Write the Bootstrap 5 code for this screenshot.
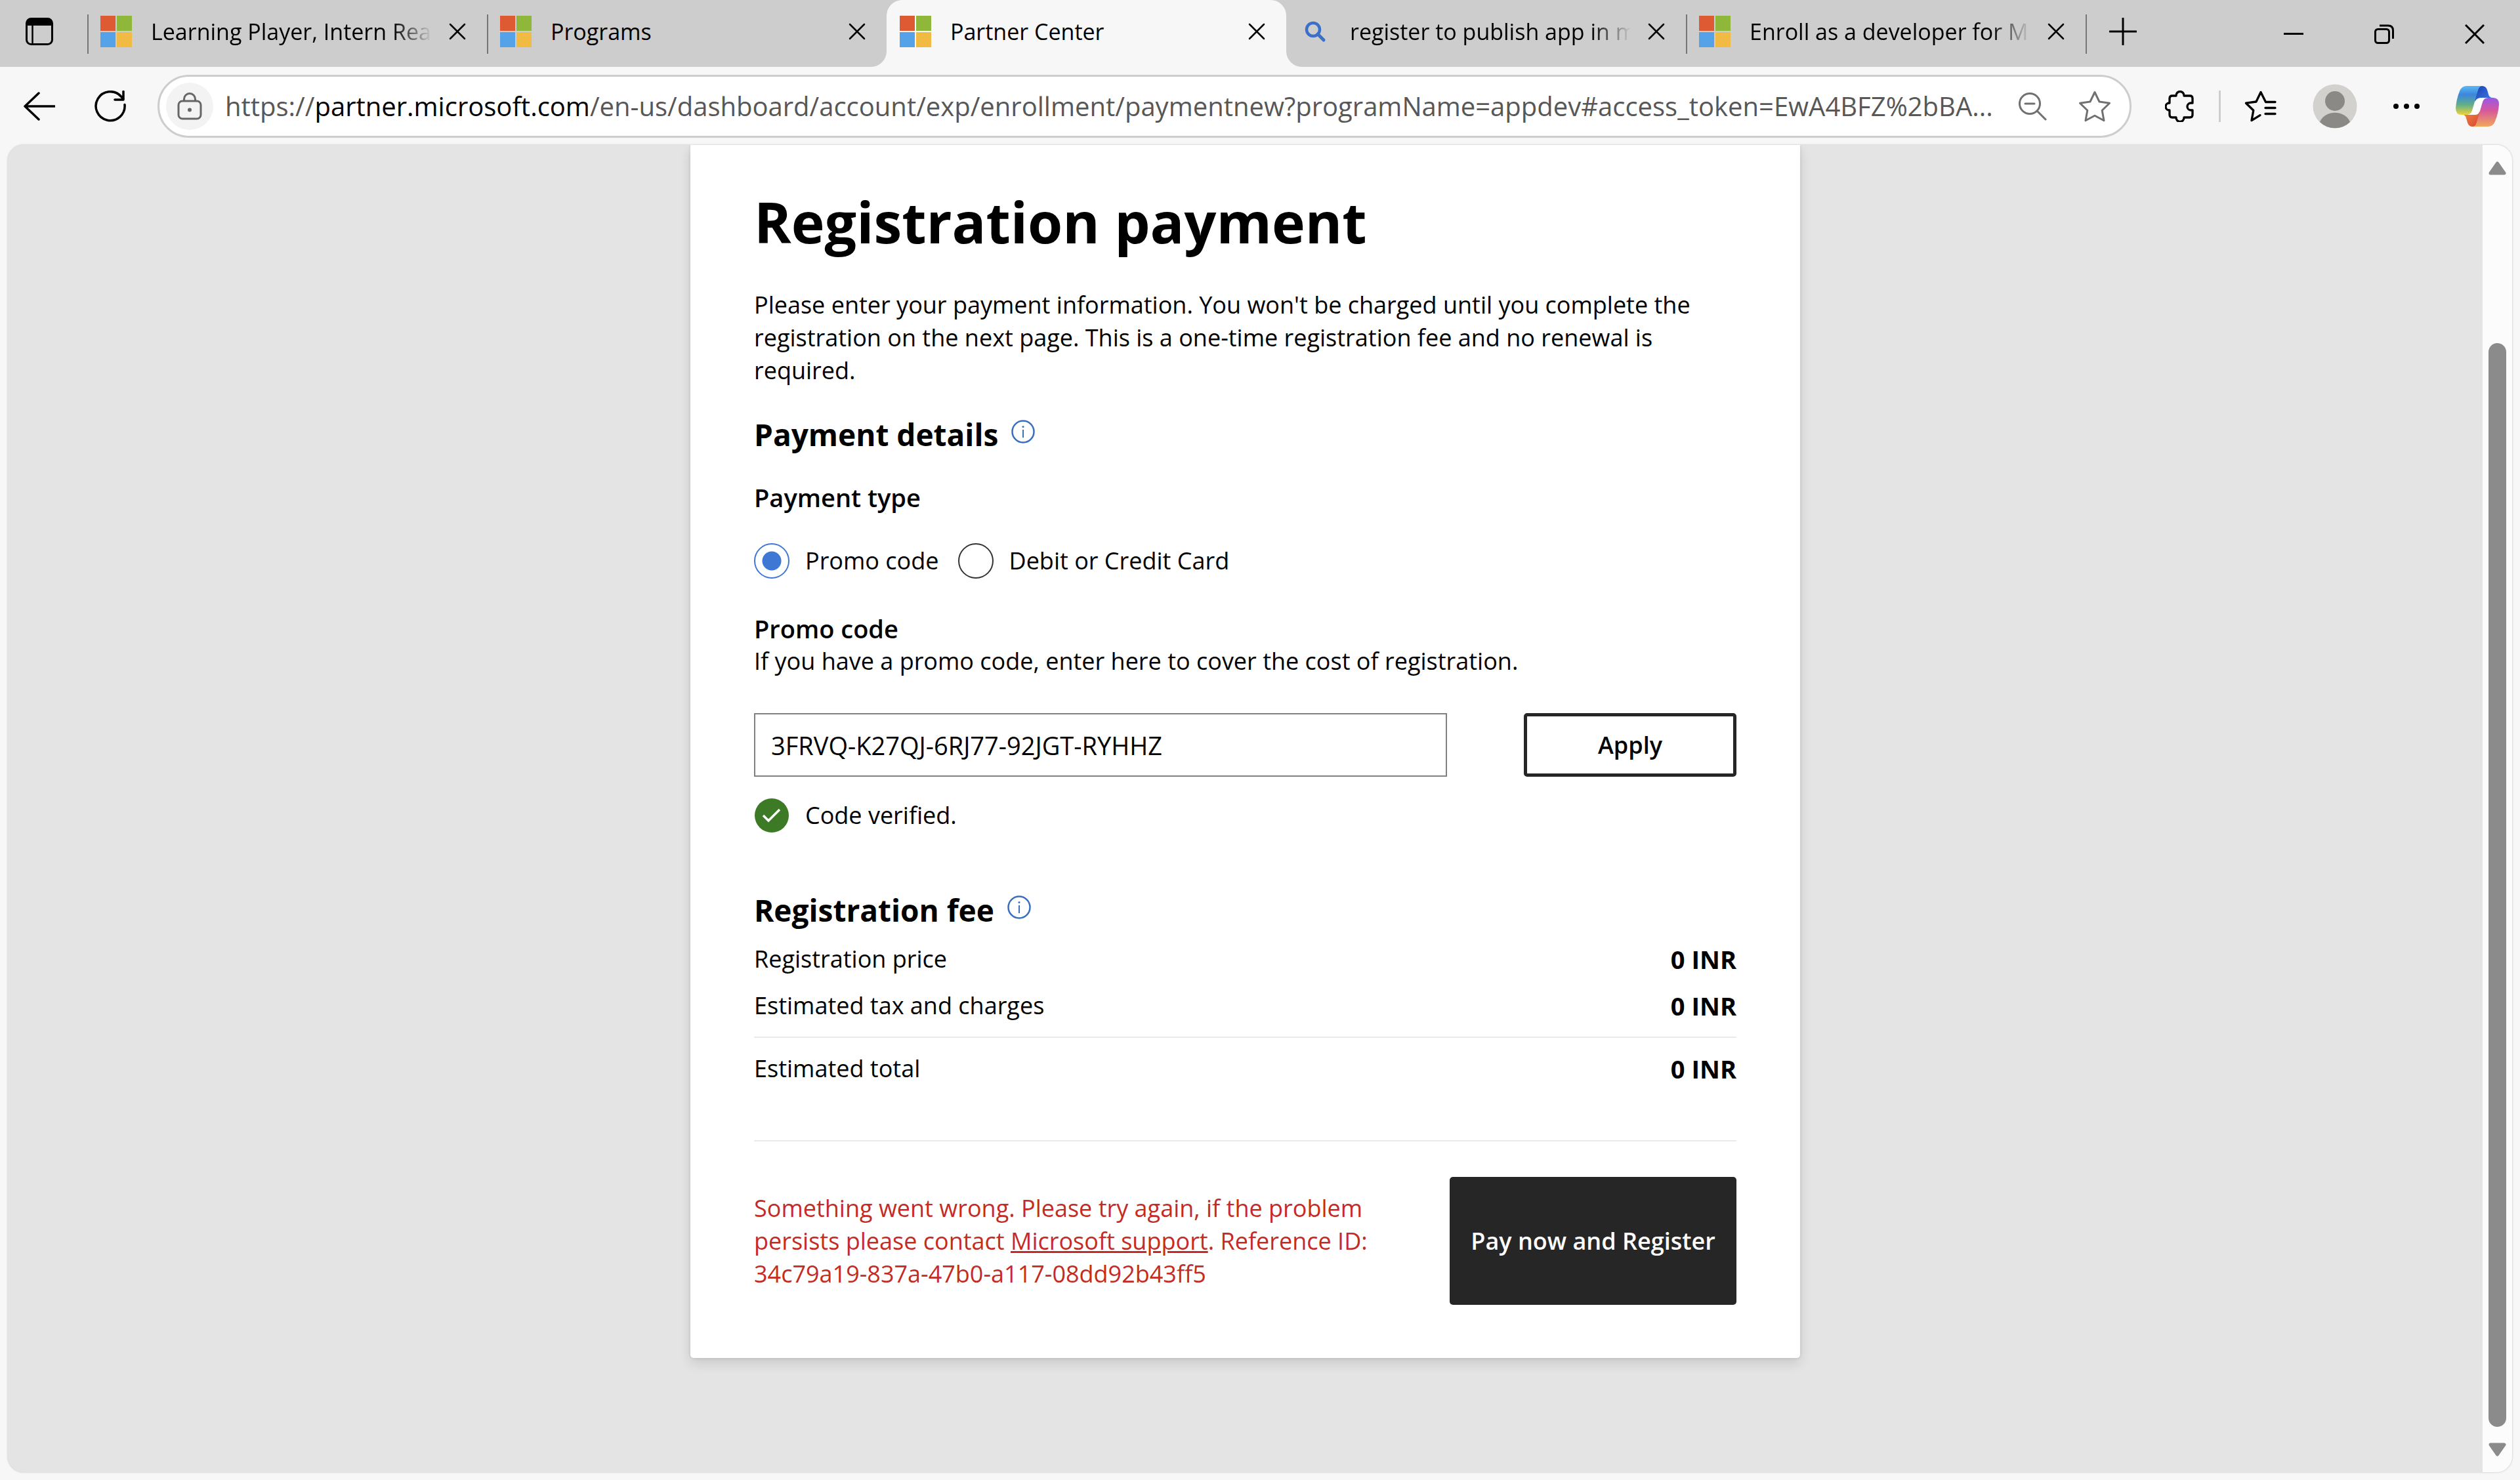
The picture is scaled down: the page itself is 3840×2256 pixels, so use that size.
<!DOCTYPE html>
<html lang="en">
<head>
<meta charset="utf-8">
<meta name="viewport" content="width=device-width, initial-scale=1">
<title>Partner Center</title>
<link href="https://cdn.jsdelivr.net/npm/bootstrap@5.3.0/dist/css/bootstrap.min.css" rel="stylesheet">
<style>
  :root { --chrome: #f7f7f7; --strip: #cdcdcd; --ink: #262626; --blue: #3f78d4; }
  body { font-family: "Open Sans", "Noto Sans", sans-serif; font-size: 36px; line-height: 50px; color: #000; background: var(--chrome); overflow: hidden; }
  svg { display: block; flex: none; }
  .plain-btn { border: 0; background: none; padding: 0; color: inherit; flex: none; display: block; }

  .tab-strip { height: 102px; background: var(--chrome); font-size: 34px; line-height: 48px; }
  .strip-start, .strip-end { background: var(--strip); }
  .strip-start { border-bottom-right-radius: 24px; }
  .strip-end { border-bottom-left-radius: 24px; }
  .workspaces { width: 133px; padding: 0 0 6px 39px; }
  .browser-tab { width: 609px; padding: 0 32px 6px 0; }
  .browser-tab::before { content: ""; width: 2px; height: 60px; margin: 8px 18px 0 0; background: #767676; flex: none; }
  .browser-tab.no-line::before { background: transparent; }
  .active-slot { background: linear-gradient(var(--strip) 50%, var(--chrome) 50%); }
  .active-slot .browser-tab { background: var(--chrome); border-radius: 24px 24px 0 0; height: 100%; }
  .tab-label { flex: 1 1 0; margin: 0 26px 0 29px; overflow: hidden; white-space: nowrap; color: #000; text-decoration: none; }
  .tab-label.fades { -webkit-mask-image: linear-gradient(90deg, #000 86%, transparent); mask-image: linear-gradient(90deg, #000 86%, transparent); }
  .window-buttons { gap: 108px; padding-right: 54px; }

  .toolbar { height: 119px; padding: 0 32px 0 36px; }
  .address { height: 96px; margin-left: 36px; padding: 0 28px 0 10px; border: 3px solid #cdcdcd; border-radius: 48px; background: #fff; }
  .lock { width: 72px; height: 72px; border-radius: 50%; background: #f3f3f3; }
  .url { margin-left: 18px; font-size: 40px; line-height: 56px; color: #575757; white-space: nowrap; overflow: hidden; }
  .url b { font-weight: 400; color: #000; }
  .tools { padding-left: 51px; }
  .bar-line { width: 3px; height: 48px; margin: 0 36px 0 38px; background: #cdcdcd; }
  .tool-group { gap: 54px; }

  .viewport { margin: 0 12px 12px; border-radius: 24px; overflow: hidden; background: #e4e4e4; box-shadow: 0 0 3px #bbb; min-height: 0; }
  .pay-card { width: 1691px; max-width: 100%; padding: 62px 97px 81px; background: #fff; border-radius: 0 0 5px 5px; box-shadow: 0 8px 18px rgba(0,0,0,.12), 0 0 5px rgba(0,0,0,.1); }
  .pay-card h1 { font-size: 86px; line-height: 110px; font-weight: 700; margin: 0 0 47px; }
  .pay-card h2 { font-size: 46px; line-height: 60px; font-weight: 700; margin: 0; }
  .pay-card h3, .field-name { font-size: 38px; line-height: 50px; font-weight: 600; margin: 0; }
  .pay-card p { margin: 0; }
  .section-head { gap: 20px; margin-top: 42px; }
  .section-head button { margin-bottom: 8px; }
  .pay-card h3 { margin-top: 41px; }
  .choices { gap: 29px; margin-top: 45px; }
  .choice { gap: 24px; }
  .choice .form-check-input { width: 54px; height: 54px; margin: 0; float: none; border: 2px solid #333; background: #fff; box-shadow: none; }
  .choice .form-check-input:checked { border-color: var(--blue); background: radial-gradient(circle, var(--blue) 14px, #fff 15px); }
  .field-name { display: block; margin-top: 51px; }
  .promo-row { gap: 117px; margin-top: 54px; }
  .promo-row .form-control { height: 97px; padding: 0 24px; border: 2px solid #808080; border-radius: 0; font-size: 38px; line-height: 50px; color: #000; }
  .apply { width: 324px; height: 97px; padding: 0; border: 5px solid var(--ink); border-radius: 5px; background: #fff; color: #000; font-size: 36px; font-weight: 600; flex: none; }
  .verified { margin-top: 33px; }
  .fee-head { margin-top: 88px; }
  .fees { width: 100%; border-collapse: separate; border-spacing: 0; margin-top: 10px; }
  .fees th { font-weight: 400; padding: 10px 0 11px; }
  .fees td { font-size: 38px; font-weight: 700; padding: 10px 0 11px; text-align: right; }
  .fees .tax > * { padding-bottom: 22px; border-bottom: 2px solid #eaeaea; }
  .fees .total > * { padding: 22px 0 84px; border-bottom: 2px solid #eaeaea; }
  .finish { margin-top: 54px; }
  .failure, .failure a { color: #c42b25; }
  .failure { width: 960px; }
  .pay { width: 437px; height: 195px; padding: 0; border: 0; border-radius: 5px; background: var(--ink); color: #fff; font-size: 36px; font-weight: 600; flex: none; }
  .scroll-track { width: 45px; background: #fcfcfc; padding: 25px 0 24px; }
  .scroll-thumb { width: 27px; margin: 256px 0 24px; border-radius: 14px; background: #8b8b8b; }
</style>
</head>
<body class="vh-100 d-flex flex-column">

<svg width="0" height="0" class="position-absolute" aria-hidden="true">
  <symbol id="ms" viewBox="0 0 48 48"><path fill="#dd5a33" d="M0 0h23v23H0z"/><path fill="#8fb83a" d="M25 0h23v23H25z"/><path fill="#56a2e8" d="M0 25h23v23H0z"/><path fill="#f1ba42" d="M25 25h23v23H25z"/></symbol>
  <symbol id="x" viewBox="0 0 26 26"><path d="M2 2l22 22M24 2L2 24" fill="none" stroke="#000" stroke-width="2.500" stroke-linecap="round"/></symbol>
  <symbol id="info" viewBox="0 0 36 36"><circle cx="18" cy="18" r="16.500" fill="none" stroke="#3a6fc0" stroke-width="2.500"/><path d="M18 15v12" stroke="#3a6fc0" stroke-width="2"/><circle cx="18" cy="10.500" r="1.500" fill="#3a6fc0"/></symbol>
</svg>

<header class="tab-strip d-flex">
  <div class="strip-start d-flex align-items-stretch">
    <div class="workspaces d-flex align-items-center">
      <button class="plain-btn" aria-label="Tab actions"><svg width="42" height="42" viewBox="0 0 42 42"><rect x="1.500" y="1.500" width="39" height="39" rx="7" fill="none" stroke="#000" stroke-width="3"/><path d="M1 12V8q0-7 7-7h26q7 0 7 7v4z"/><path d="M10.500 12v28" stroke="#000" stroke-width="2.500"/></svg></button>
    </div>
    <div class="browser-tab d-flex align-items-center"><svg width="48" height="48"><use href="#ms"/></svg><a href="#" class="tab-label fades">Learning Player, Intern Readiness</a><button class="plain-btn" aria-label="Close tab"><svg width="26" height="26"><use href="#x"/></svg></button></div>
    <div class="browser-tab d-flex align-items-center"><svg width="48" height="48"><use href="#ms"/></svg><a href="#" class="tab-label">Programs</a><button class="plain-btn" aria-label="Close tab"><svg width="26" height="26"><use href="#x"/></svg></button></div>
  </div>
  <div class="active-slot">
    <div class="browser-tab no-line d-flex align-items-center"><svg width="48" height="48"><use href="#ms"/></svg><a href="#" class="tab-label">Partner Center</a><button class="plain-btn" aria-label="Close tab"><svg width="26" height="26"><use href="#x"/></svg></button></div>
  </div>
  <div class="strip-end d-flex align-items-stretch flex-grow-1">
    <div class="browser-tab no-line d-flex align-items-center"><svg width="48" height="48" viewBox="0 0 48 48"><circle cx="21" cy="21" r="10" fill="none" stroke="#3a70c8" stroke-width="4.500"/><path d="M28 28l9 9" stroke="#3a70c8" stroke-width="5" stroke-linecap="round"/></svg><a href="#" class="tab-label fades">register to publish app in microsoft</a><button class="plain-btn" aria-label="Close tab"><svg width="26" height="26"><use href="#x"/></svg></button></div>
    <div class="browser-tab d-flex align-items-center"><svg width="48" height="48"><use href="#ms"/></svg><a href="#" class="tab-label fades">Enroll as a developer for Microsoft</a><button class="plain-btn" aria-label="Close tab"><svg width="26" height="26"><use href="#x"/></svg></button></div>
    <div class="browser-tab d-flex align-items-center w-auto flex-grow-1 pe-0">
      <button class="plain-btn ms-3" aria-label="New tab"><svg width="42" height="42" viewBox="0 0 42 42"><path d="M21 1v40M1 21h40" stroke="#000" stroke-width="3" stroke-linecap="round"/></svg></button>
      <div class="window-buttons d-flex ms-auto mt-2">
        <button class="plain-btn" aria-label="Minimize"><svg width="30" height="30" viewBox="0 0 30 30"><path d="M0 14.500h30" stroke="#000" stroke-width="3"/></svg></button>
        <button class="plain-btn" aria-label="Restore"><svg width="30" height="30" viewBox="0 0 30 30" fill="none" stroke="#000" stroke-width="3"><rect x="1.500" y="7.500" width="21" height="21" rx="4"/><path d="M8 2h13q7.500 0 7.500 7.500V22"/></svg></button>
        <button class="plain-btn" aria-label="Close"><svg width="30" height="30" viewBox="0 0 30 30"><path d="M1 1l28 28M29 1L1 29" stroke="#000" stroke-width="3"/></svg></button>
      </div>
    </div>
  </div>
</header>

<nav class="toolbar d-flex align-items-center" aria-label="Browser toolbar">
  <button class="plain-btn" aria-label="Back"><svg width="48" height="48" viewBox="0 0 48 48"><path d="M23 4L2 24l21 20M2 24h45" fill="none" stroke="#000" stroke-width="3.500" stroke-linecap="round" stroke-linejoin="round"/></svg></button>
  <button class="plain-btn ms-5" aria-label="Refresh"><svg width="72" height="48" viewBox="0 0 72 48"><path d="M58 21.500A22 22 0 1 1 52.500 9L56 13M56 1.500V14H43" fill="none" stroke="#000" stroke-width="3.500" stroke-linecap="round" stroke-linejoin="round"/></svg></button>
  <div class="address d-flex align-items-center flex-grow-1">
    <button class="plain-btn lock d-flex align-items-center justify-content-center" aria-label="View site information"><svg width="38" height="44" viewBox="0 0 38 44" fill="none" stroke="#666" stroke-width="3"><rect x="2" y="14" width="34" height="27" rx="6"/><path d="M10.500 14v-3a8.500 8.500 0 0 1 17 0v3"/><circle cx="19" cy="27.500" r="3" fill="#666" stroke="none"/></svg></button>
    <div class="url flex-grow-1" role="textbox" aria-label="Address" tabindex="0">https://<b>partner.microsoft.com</b>/en-us/dashboard/account/exp/enrollment/paymentnew?programName=appdev#access_token=EwA4BFZ%2bBA...</div>
    <button class="plain-btn" aria-label="Zoom out"><svg width="44" height="44" viewBox="0 0 44 44" fill="none" stroke="#707070" stroke-width="3" stroke-linecap="round"><circle cx="18" cy="18" r="15.500"/><path d="M29 29l13 13M11 18h14"/></svg></button>
    <button class="plain-btn ms-5" aria-label="Add to favorites"><svg width="50" height="48" viewBox="0 0 50 48"><path d="M25 2.500l7 14.500 15.500 2.200-11.300 11 2.800 15.500L25 38.200 11 45.700l2.800-15.500-11.300-11L18 17z" fill="none" stroke="#707070" stroke-width="3" stroke-linejoin="round"/></svg></button>
  </div>
  <div class="tools d-flex align-items-center">
    <button class="plain-btn" aria-label="Extensions"><svg width="44" height="48" viewBox="0 0 44 48"><path d="M11 8h6V7.500a6 6 0 0 1 12 0V8h9q4 0 4 4v7h-2.500a5.500 5.500 0 0 0 0 11H42v7q0 4-4 4h-9v.500a6 6 0 0 1-12 0V41h-6q-4 0-4-4v-7h-.500a5.500 5.500 0 0 1 0-11H7v-7q0-4 4-4z" fill="none" stroke="#000" stroke-width="3.300" stroke-linejoin="round"/></svg></button>
    <span class="bar-line"></span>
    <div class="tool-group d-flex align-items-center">
    <button class="plain-btn" aria-label="Favorites"><svg width="50" height="48" viewBox="0 0 50 48" fill="none" stroke="#000" stroke-width="3.300" stroke-linecap="round" stroke-linejoin="round"><path d="M47 17.500H32.500L25 2.500 18 17 2.500 19.200l11.300 11L11 45.700l13-8M32 26.500h15M32 35.500h15"/></svg></button>
    <button class="plain-btn" aria-label="Profile"><svg width="68" height="68" viewBox="0 0 68 68"><circle cx="34" cy="34" r="33.500" fill="#d2d1cd"/><circle cx="34" cy="26" r="15" fill="#8a8986"/><path d="M11 58a24 20 0 0 1 46 0a33 33 0 0 1-46 0z" fill="#8a8986"/></svg></button>
    <button class="plain-btn" aria-label="Settings and more"><svg width="42" height="10" viewBox="0 0 42 10"><circle cx="5" cy="5" r="4"/><circle cx="21" cy="5" r="4"/><circle cx="37" cy="5" r="4"/></svg></button>
    <button class="plain-btn" aria-label="Copilot"><svg width="66" height="62" viewBox="0 0 66 62">
      <defs>
        <linearGradient id="g1" x1="0" y1="0" x2="0" y2="1"><stop offset="0" stop-color="#5bb9f5"/><stop offset=".3" stop-color="#3d85dc"/><stop offset=".65" stop-color="#5fb08a"/><stop offset="1" stop-color="#f0d23a"/></linearGradient>
        <linearGradient id="g2" x1="0" y1="0" x2="0" y2="1"><stop offset="0" stop-color="#9a57e8"/><stop offset=".45" stop-color="#d8589c"/><stop offset="1" stop-color="#f0a95a"/></linearGradient>
        <linearGradient id="g3" x1="0" y1="0" x2="1" y2="1"><stop offset="0" stop-color="#1b3fae"/><stop offset="1" stop-color="#3f7fee"/></linearGradient>
        <linearGradient id="g4" x1="0" y1="0" x2="1" y2="1"><stop offset="0" stop-color="#f08a3c"/><stop offset="1" stop-color="#d8433a"/></linearGradient>
      </defs>
      <path fill="url(#g3)" d="M36 0h4q6 0 8 6l2 7q1 4 5 5H41q-7 0-9 7l-4-3z"/>
      <path fill="url(#g4)" d="M30 62h-4q-6 0-8-6l-2-7q-1-4-4-5h13q7 0 9-7l4 3z"/>
      <path fill="url(#g1)" d="M17 0h24q-5 0-7 6l-9 32q-2 6-8 6H9Q0 44 0 34 1 20 6 8 9 0 17 0z"/>
      <path fill="url(#g2)" d="M49 62H25q5 0 7-6l9-32q2-6 8-6h8q9 0 9 10-1 14-6 26-3 8-11 8z"/>
      <path fill="#fff" d="M40 18h9q-6 0-8 6l-5 16q-2 4-6 4h-13q6 0 8-6l5-15q2-5 10-5z"/>
    </svg></button>
    </div>
  </div>
</nav>

<div class="viewport d-flex flex-grow-1">
  <main class="flex-grow-1 d-flex justify-content-center align-items-start">
    <form class="pay-card" onsubmit="return false">
      <h1>Registration payment</h1>
      <p>Please enter your payment information. You won't be charged until you complete the registration on the next page. This is a one-time registration fee and no renewal is required.</p>

      <div class="section-head d-flex align-items-center">
        <h2>Payment details</h2>
        <button type="button" class="plain-btn" aria-label="About payment details"><svg width="36" height="36"><use href="#info"/></svg></button>
      </div>
      <h3>Payment type</h3>
      <div class="choices d-flex">
        <div class="choice d-flex align-items-center"><input class="form-check-input" type="radio" name="paytype" id="byPromo" checked><label for="byPromo">Promo code</label></div>
        <div class="choice d-flex align-items-center"><input class="form-check-input" type="radio" name="paytype" id="byCard"><label for="byCard">Debit or Credit Card</label></div>
      </div>

      <label class="field-name" for="promo">Promo code</label>
      <p>If you have a promo code, enter here to cover the cost of registration.</p>
      <div class="promo-row d-flex">
        <input class="form-control" type="text" id="promo" value="3FRVQ-K27QJ-6RJ77-92JGT-RYHHZ">
        <button type="button" class="btn apply">Apply</button>
      </div>
      <div class="choice verified d-flex align-items-center" role="status"><svg width="54" height="52" viewBox="0 0 54 52"><circle cx="27" cy="26" r="26" fill="#3d7a26"/><path d="M14 26l8 8 17-17" fill="none" stroke="#fff" stroke-width="3.500"/></svg><span>Code verified.</span></div>

      <div class="section-head fee-head d-flex align-items-center">
        <h2>Registration fee</h2>
        <button type="button" class="plain-btn" aria-label="About the registration fee"><svg width="36" height="36"><use href="#info"/></svg></button>
      </div>
      <table class="fees">
        <tr><th scope="row">Registration price</th><td>0 INR</td></tr>
        <tr class="tax"><th scope="row">Estimated tax and charges</th><td>0 INR</td></tr>
        <tr class="total"><th scope="row">Estimated total</th><td>0 INR</td></tr>
      </table>
      <div class="finish d-flex align-items-center justify-content-between">
        <p class="failure" role="alert">Something went wrong. Please try again, if the problem persists please contact <a href="#">Microsoft support</a>. Reference ID: 34c79a19-837a-47b0-a117-08dd92b43ff5</p>
        <button type="submit" class="btn pay">Pay now and Register</button>
      </div>
    </form>
  </main>
  <div class="scroll-track d-flex flex-column align-items-center">
    <svg width="27" height="21" viewBox="0 0 27 21"><path d="M13.500 3L24 18H3z" fill="#8b8b8b" stroke="#8b8b8b" stroke-width="5" stroke-linejoin="round"/></svg>
    <div class="scroll-thumb flex-grow-1"></div>
    <svg width="27" height="21" viewBox="0 0 27 21"><path d="M13.500 18L24 3H3z" fill="#8b8b8b" stroke="#8b8b8b" stroke-width="5" stroke-linejoin="round"/></svg>
  </div>
</div>
<script src="https://cdn.jsdelivr.net/npm/bootstrap@5.3.0/dist/js/bootstrap.bundle.min.js"></script>
</body>
</html>
